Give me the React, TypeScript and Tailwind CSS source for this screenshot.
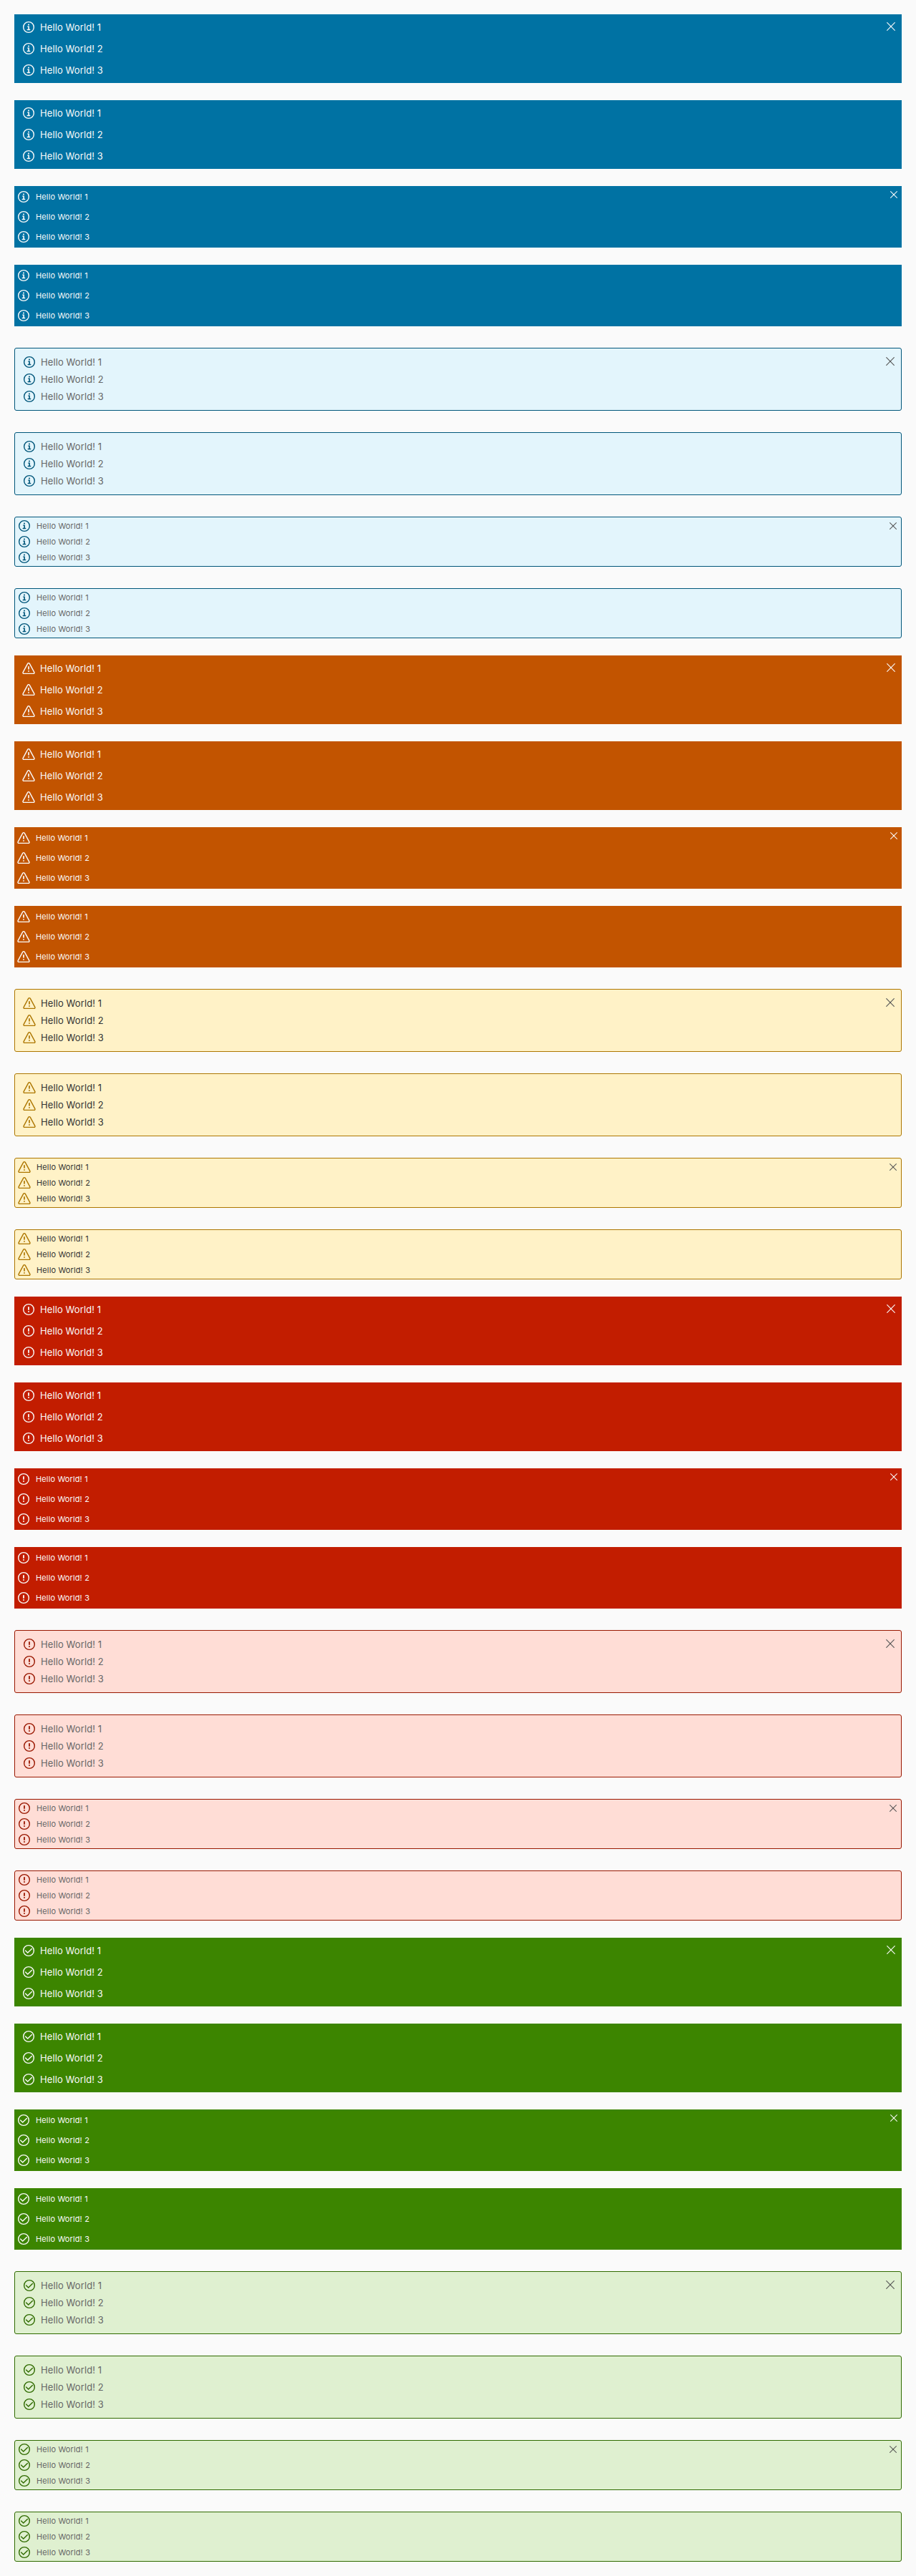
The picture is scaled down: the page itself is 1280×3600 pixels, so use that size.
import React from "react";

type Status = "info" | "warning" | "danger" | "success";

function StatusIcon({ status }: { status: Status }) {
  return (
    <svg viewBox="0 0 36 36" className="block size-[18px] shrink-0" fill="currentColor">
      {status !== "warning" && <circle cx="18" cy="18" r="14.7" fill="none" stroke="currentColor" strokeWidth="2.8" />}
      {status === "info" && (
        <>
          <circle cx="18" cy="10.9" r="2.1" />
          <path d="M21.4,23.7H19.9V14.8H15.3a1.3,1.3,0,0,0,0,2.6h1.4v6.3H14.4a1.35,1.35,0,1,0,0,2.7h7a1.35,1.35,0,0,0,0-2.7Z" />
        </>
      )}
      {status === "danger" && (
        <>
          <rect x="16.2" y="9.8" width="3.6" height="10" rx="1.5" />
          <circle cx="18" cy="24.2" r="2" />
        </>
      )}
      {status === "success" && (
        <path
          d="M9.2,18.2 15.4,24.2 26.8,13"
          fill="none"
          stroke="currentColor"
          strokeWidth="2.8"
          strokeLinecap="round"
        />
      )}
      {status === "warning" && (
        <>
          <path
            d="M15.4,4.8a3,3,0,0,1,5.2,0L33.8,29.2A2.5,2.5,0,0,1,31.6,32.7H4.4A2.5,2.5,0,0,1,2.2,29.2Z"
            fill="none"
            stroke="currentColor"
            strokeWidth="2.8"
          />
          <rect x="16.3" y="11.8" width="3.4" height="9.8" rx="1.5" />
          <circle cx="18" cy="25.8" r="1.9" />
        </>
      )}
    </svg>
  );
}

function CloseIcon({ className }: { className: string }) {
  return (
    <svg viewBox="0 0 12 12" className={`absolute ${className}`} fill="none" stroke="currentColor" strokeLinecap="round">
      <path d="M.7.7 11.3 11.3M11.3.7.7 11.3" />
    </svg>
  );
}

interface Tone {
  banner: string;
  alert: string;
  icon: string;
  text: string;
}

const tones: Record<Status, Tone> = {
  info: { banner: "bg-[#0072a3]", alert: "bg-[#e3f5fc] border-[#00567a]", icon: "text-[#00567a]", text: "text-[#666666]" },
  warning: { banner: "bg-[#c25400]", alert: "bg-[#fff2c7] border-[#ad7600]", icon: "text-[#ad7600]", text: "text-[#333333]" },
  danger: { banner: "bg-[#c21d00]", alert: "bg-[#ffddd6] border-[#991700]", icon: "text-[#991700]", text: "text-[#666666]" },
  success: { banner: "bg-[#3c8500]", alert: "bg-[#dff0d0] border-[#306b00]", icon: "text-[#306b00]", text: "text-[#666666]" },
};

interface AlertProps {
  status: Status;
  banner?: boolean;
  compact?: boolean;
  closable?: boolean;
}

function Alert({ status, banner, compact, closable }: AlertProps) {
  const tone = tones[status];
  const frame = banner
    ? `${tone.banner} text-[#fafafa] ${compact ? "h-[86px] pt-1.5 pl-1" : "h-24 pt-[9px] pl-[11px]"}`
    : `mt-1.5 rounded-[3px] border ${tone.alert} ${compact ? "h-[70px] pt-[3px] pl-1" : "h-[88px] pt-2.5 pl-[11px]"}`;
  const rowGap = banner ? (compact ? "gap-2.5" : "gap-3") : compact ? "gap-1" : "gap-1.5";
  const label = compact
    ? "ml-2 text-[11px] tracking-[0.13px]"
    : "ml-[7px] text-[13px] tracking-[0.1px]";
  const closePosition = compact
    ? "size-2.5 top-[7px] right-1.5 stroke-[1.25]"
    : banner
      ? "size-3 top-[10.5px] right-[9.5px] stroke-[1.15]"
      : "size-3 top-[11.5px] right-[9.5px] stroke-[1.15]";
  return (
    <div className={`relative ${frame}`}>
      <div className={`flex flex-col ${rowGap}`}>
        {[1, 2, 3].map((n) => (
          <div key={n} className="flex h-[18px] items-center">
            <span className={banner ? "" : tone.icon}>
              <StatusIcon status={status} />
            </span>
            <span className={`${label} leading-[18px] whitespace-nowrap ${banner ? "" : tone.text}`}>
              Hello World! {n}
            </span>
          </div>
        ))}
      </div>
      {closable && (
        <span className={banner ? "" : "text-[#565656]"}>
          <CloseIcon className={closePosition} />
        </span>
      )}
    </div>
  );
}

const statuses: Status[] = ["info", "warning", "danger", "success"];

export default function App() {
  return (
    <main className="flex min-h-[3600px] flex-col gap-6 bg-[#fafafa] p-5 font-['Inter',sans-serif]">
      {statuses.map((status) => (
        <section key={status} className="flex flex-col gap-6">
          <Alert status={status} banner closable />
          <Alert status={status} banner />
          <Alert status={status} banner compact closable />
          <Alert status={status} banner compact />
          <Alert status={status} closable />
          <Alert status={status} />
          <Alert status={status} compact closable />
          <Alert status={status} compact />
        </section>
      ))}
    </main>
  );
}
